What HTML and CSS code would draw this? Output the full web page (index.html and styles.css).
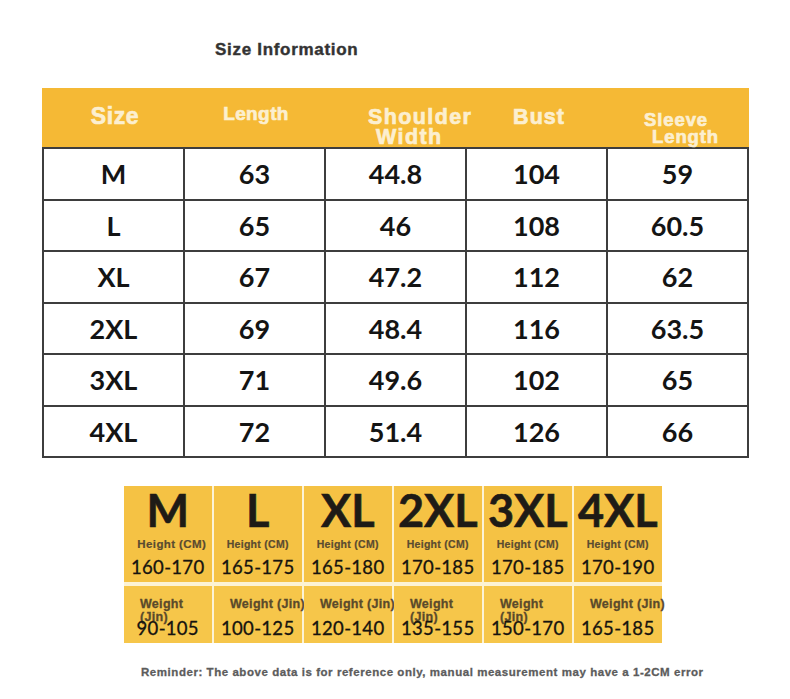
FILE: index.html
```html
<!DOCTYPE html>
<html>
<head>
<meta charset="utf-8">
<link rel="stylesheet" href="styles.css">
</head>
<body>
<h1 class="title">Size Information</h1>
<div class="sheet">
  <div class="head">
    <div class="hc hc-size">Size</div>
    <div class="hc hc-length">Length</div>
    <div class="hc hc-shoulder"><span class="l1">Shoulder</span><span class="l2">Width</span></div>
    <div class="hc hc-bust">Bust</div>
    <div class="hc hc-sleeve"><span class="l1">Sleeve</span><span class="l2">Length</span></div>
  </div>
  <div class="body">
    <div class="c">M</div><div class="c">63</div><div class="c">44.8</div><div class="c">104</div><div class="c">59</div>
    <div class="c">L</div><div class="c">65</div><div class="c">46</div><div class="c">108</div><div class="c">60.5</div>
    <div class="c">XL</div><div class="c">67</div><div class="c">47.2</div><div class="c">112</div><div class="c">62</div>
    <div class="c">2XL</div><div class="c">69</div><div class="c">48.4</div><div class="c">116</div><div class="c">63.5</div>
    <div class="c">3XL</div><div class="c">71</div><div class="c">49.6</div><div class="c">102</div><div class="c">65</div>
    <div class="c">4XL</div><div class="c">72</div><div class="c">51.4</div><div class="c">126</div><div class="c">66</div>
  </div>
</div>
<div class="cards">
  <div class="card top"><div class="big">M</div><div class="lbl lbl-m">Height (CM)</div><div class="num">160-170</div></div>
  <div class="card top"><div class="big">L</div><div class="lbl">Height (CM)</div><div class="num">165-175</div></div>
  <div class="card top"><div class="big">XL</div><div class="lbl">Height (CM)</div><div class="num">165-180</div></div>
  <div class="card top"><div class="big">2XL</div><div class="lbl">Height (CM)</div><div class="num">170-185</div></div>
  <div class="card top"><div class="big">3XL</div><div class="lbl">Height (CM)</div><div class="num">170-185</div></div>
  <div class="card top"><div class="big">4XL</div><div class="lbl">Height (CM)</div><div class="num">170-190</div></div>
  <div class="card bot"><div class="wl wrap">Weight (Jin)</div><div class="num">90-105</div></div>
  <div class="card bot"><div class="wl">Weight (Jin)</div><div class="num">100-125</div></div>
  <div class="card bot"><div class="wl">Weight (Jin)</div><div class="num">120-140</div></div>
  <div class="card bot"><div class="wl wrap">Weight (Jin)</div><div class="num">135-155</div></div>
  <div class="card bot"><div class="wl wrap">Weight (Jin)</div><div class="num">150-170</div></div>
  <div class="card bot"><div class="wl">Weight (Jin)</div><div class="num">165-185</div></div>
</div>
<p class="note">Reminder: The above data is for reference only, manual measurement may have a 1-2CM error</p>
</body>
</html>
```
FILE: styles.css
```css
body {
  margin: 0;
  background: #ffffff;
  font-family: "Liberation Sans", Arial, sans-serif;
}
.title {
  margin: 0;
  height: 47px;
  padding: 41px 0 0 215px;
  font: 700 17px/18px "Liberation Sans", Arial, sans-serif;
  letter-spacing: 0.7px;
  color: #333333;
  -webkit-text-stroke: 0.4px #333333;
}
.sheet {
  margin-left: 42px;
  width: 707px;
}
.head {
  height: 59px;
  background: #f5b935;
  display: grid;
  grid-template-columns: 142px 142px 141px 141px 141px;
  color: #fcefd0;
  font-weight: 700;
  font-family: "Liberation Sans", Arial, sans-serif;
  -webkit-text-stroke: 0.7px #fcefd0;
}
.hc { white-space: nowrap; }
.hc .l1, .hc .l2 { display: block; }
.hc-size {
  font-size: 23px; line-height: 1; letter-spacing: 0.6px;
  padding-top: 17px; text-align: center; padding-left: 4px;
}
.hc-length {
  font-size: 19px; line-height: 1; letter-spacing: 0.4px;
  padding-top: 16px; text-align: center; padding-left: 2px;
}
.hc-shoulder {
  font-size: 21.5px; line-height: 20px; letter-spacing: 1.4px;
  padding-top: 19px; padding-left: 42px;
}
.hc-shoulder .l2 { margin-left: 8px; }
.hc-bust {
  font-size: 21.5px; line-height: 1; letter-spacing: 1px;
  padding-top: 19px; text-align: center; padding-left: 3px;
}
.hc-sleeve {
  font-size: 18.5px; line-height: 17px; letter-spacing: 0.9px;
  padding-top: 23px; padding-left: 36px;
}
.hc-sleeve .l2 { margin-left: 8px; }
.body {
  display: grid;
  grid-template-columns: repeat(5, 1fr);
  grid-auto-rows: 51.5px;
  border-top: 2px solid #3d3d3d;
  border-left: 2px solid #3d3d3d;
}
.c {
  border-right: 2px solid #3d3d3d;
  border-bottom: 2px solid #3d3d3d;
  display: flex;
  align-items: center;
  justify-content: center;
  font: 700 27px/1 Lato, "DejaVu Sans", sans-serif;
  color: #141414;
}
.cards {
  margin: 28px 0 0 124px;
  width: 537.5px;
  display: grid;
  grid-template-columns: repeat(6, 87.5px);
  grid-template-rows: 96px 57px;
  column-gap: 2.5px;
  row-gap: 4px;
  background: #fcf3d6;
}
.card {
  background: #f5c244;
  color: #1b1915;
}
.bot { background: #f6c64a; padding-top: 12px; box-sizing: border-box; }
.big {
  font: 700 45px/48px Lato, "DejaVu Sans", sans-serif;
  text-align: center;
  color: #1e1b16;
  -webkit-text-stroke: 0.6px #1e1b16;
}
.lbl {
  margin-top: 3px;
  font: 700 10.5px/14px "Liberation Sans", Arial, sans-serif;
  letter-spacing: 0.3px;
  color: #5a4b30;
  -webkit-text-stroke: 0.2px #5a4b30;
  text-align: center;
  white-space: nowrap;
}
.lbl-m { font-size: 11.5px; letter-spacing: 0.4px; padding-left: 8px; }
.num {
  margin-top: 5px;
  font: 400 18.5px/22px Lato, "DejaVu Sans", sans-serif;
  letter-spacing: 0.3px;
  text-align: center;
  color: #15130f;
  -webkit-text-stroke: 0.3px #15130f;
}
.bot .num { margin-top: 0; }
.wl {
  height: 19px;
  padding-left: 16px;
  font: 700 12.5px/13px "Liberation Sans", Arial, sans-serif;
  letter-spacing: 0.3px;
  color: #5a4a2b;
  -webkit-text-stroke: 0.3px #5a4a2b;
  white-space: nowrap;
}
.wl.wrap {
  white-space: normal;
  width: 52px;
}
.note {
  margin: 22px 0 0 141px;
  font: 700 11.5px/14px "Liberation Sans", Arial, sans-serif;
  letter-spacing: 0.55px;
  color: #5c5c5c;
  -webkit-text-stroke: 0.3px #5c5c5c;
  white-space: nowrap;
}
```
